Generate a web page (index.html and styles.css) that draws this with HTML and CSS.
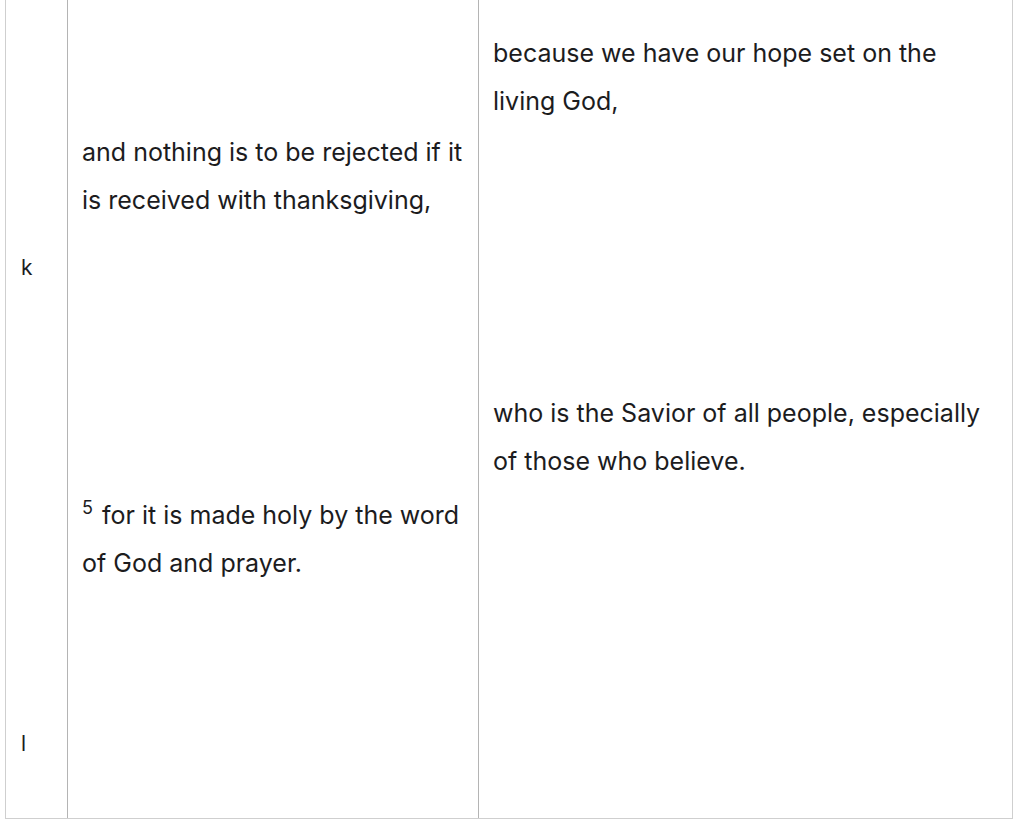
FILE: index.html
```html
<!DOCTYPE html>
<html lang="en">
<head>
<meta charset="utf-8">
<title>Verses</title>
<link rel="stylesheet" href="styles.css">
</head>
<body>
<div class="sheet">
  <div class="cell labels">
    <div class="label label-k">k</div>
    <div class="label label-l">l</div>
  </div>
  <div class="cell verses verses-left">
    <p class="verse verse-a">and nothing is to be rejected if it is received with thanksgiving,</p>
    <p class="verse verse-b"><sup class="num">5</sup> for it is made holy by the word of God and prayer.</p>
  </div>
  <div class="cell verses verses-right">
    <p class="verse verse-c">because we have our hope set on the living God,</p>
    <p class="verse verse-d">who is the Savior of all people, especially of those who believe.</p>
  </div>
</div>
</body>
</html>
```
FILE: styles.css
```css
html, body {
  margin: 0;
  padding: 0;
  background: #ffffff;
}
body {
  font-family: Inter, "Noto Sans", "Liberation Sans", sans-serif;
  color: #1c1c1e;
}
.sheet {
  display: grid;
  grid-template-columns: 61px 411px 1fr;
  box-sizing: border-box;
  width: 1008px;
  height: 819px;
  margin-left: 5px;
  border-left: 1px solid #cfcfcf;
  border-right: 1px solid #cfcfcf;
  border-bottom: 1px solid #cfcfcf;
}
.cell {
  box-sizing: border-box;
  display: flex;
  flex-direction: column;
}
.cell + .cell {
  border-left: 1px solid #b4b4b4;
}
.labels {
  padding-left: 15px;
}
.label {
  font-size: 21px;
  line-height: 24px;
}
.label-k {
  margin-top: 256px;
}
.label-l {
  margin-top: 452px;
}
.verses {
  padding-left: 14px;
  padding-right: 14px;
}
.verse {
  margin: 0;
  font-size: 25px;
  line-height: 48px;
}
.verse-a { margin-top: 128px; }
.verse-b { margin-top: 267px; }
.verse-c { margin-top: 29px; }
.verse-d { margin-top: 264px; }
.num {
  font-size: 18px;
  line-height: 0;
  vertical-align: 10px;
  margin-right: 2px;
}
```
